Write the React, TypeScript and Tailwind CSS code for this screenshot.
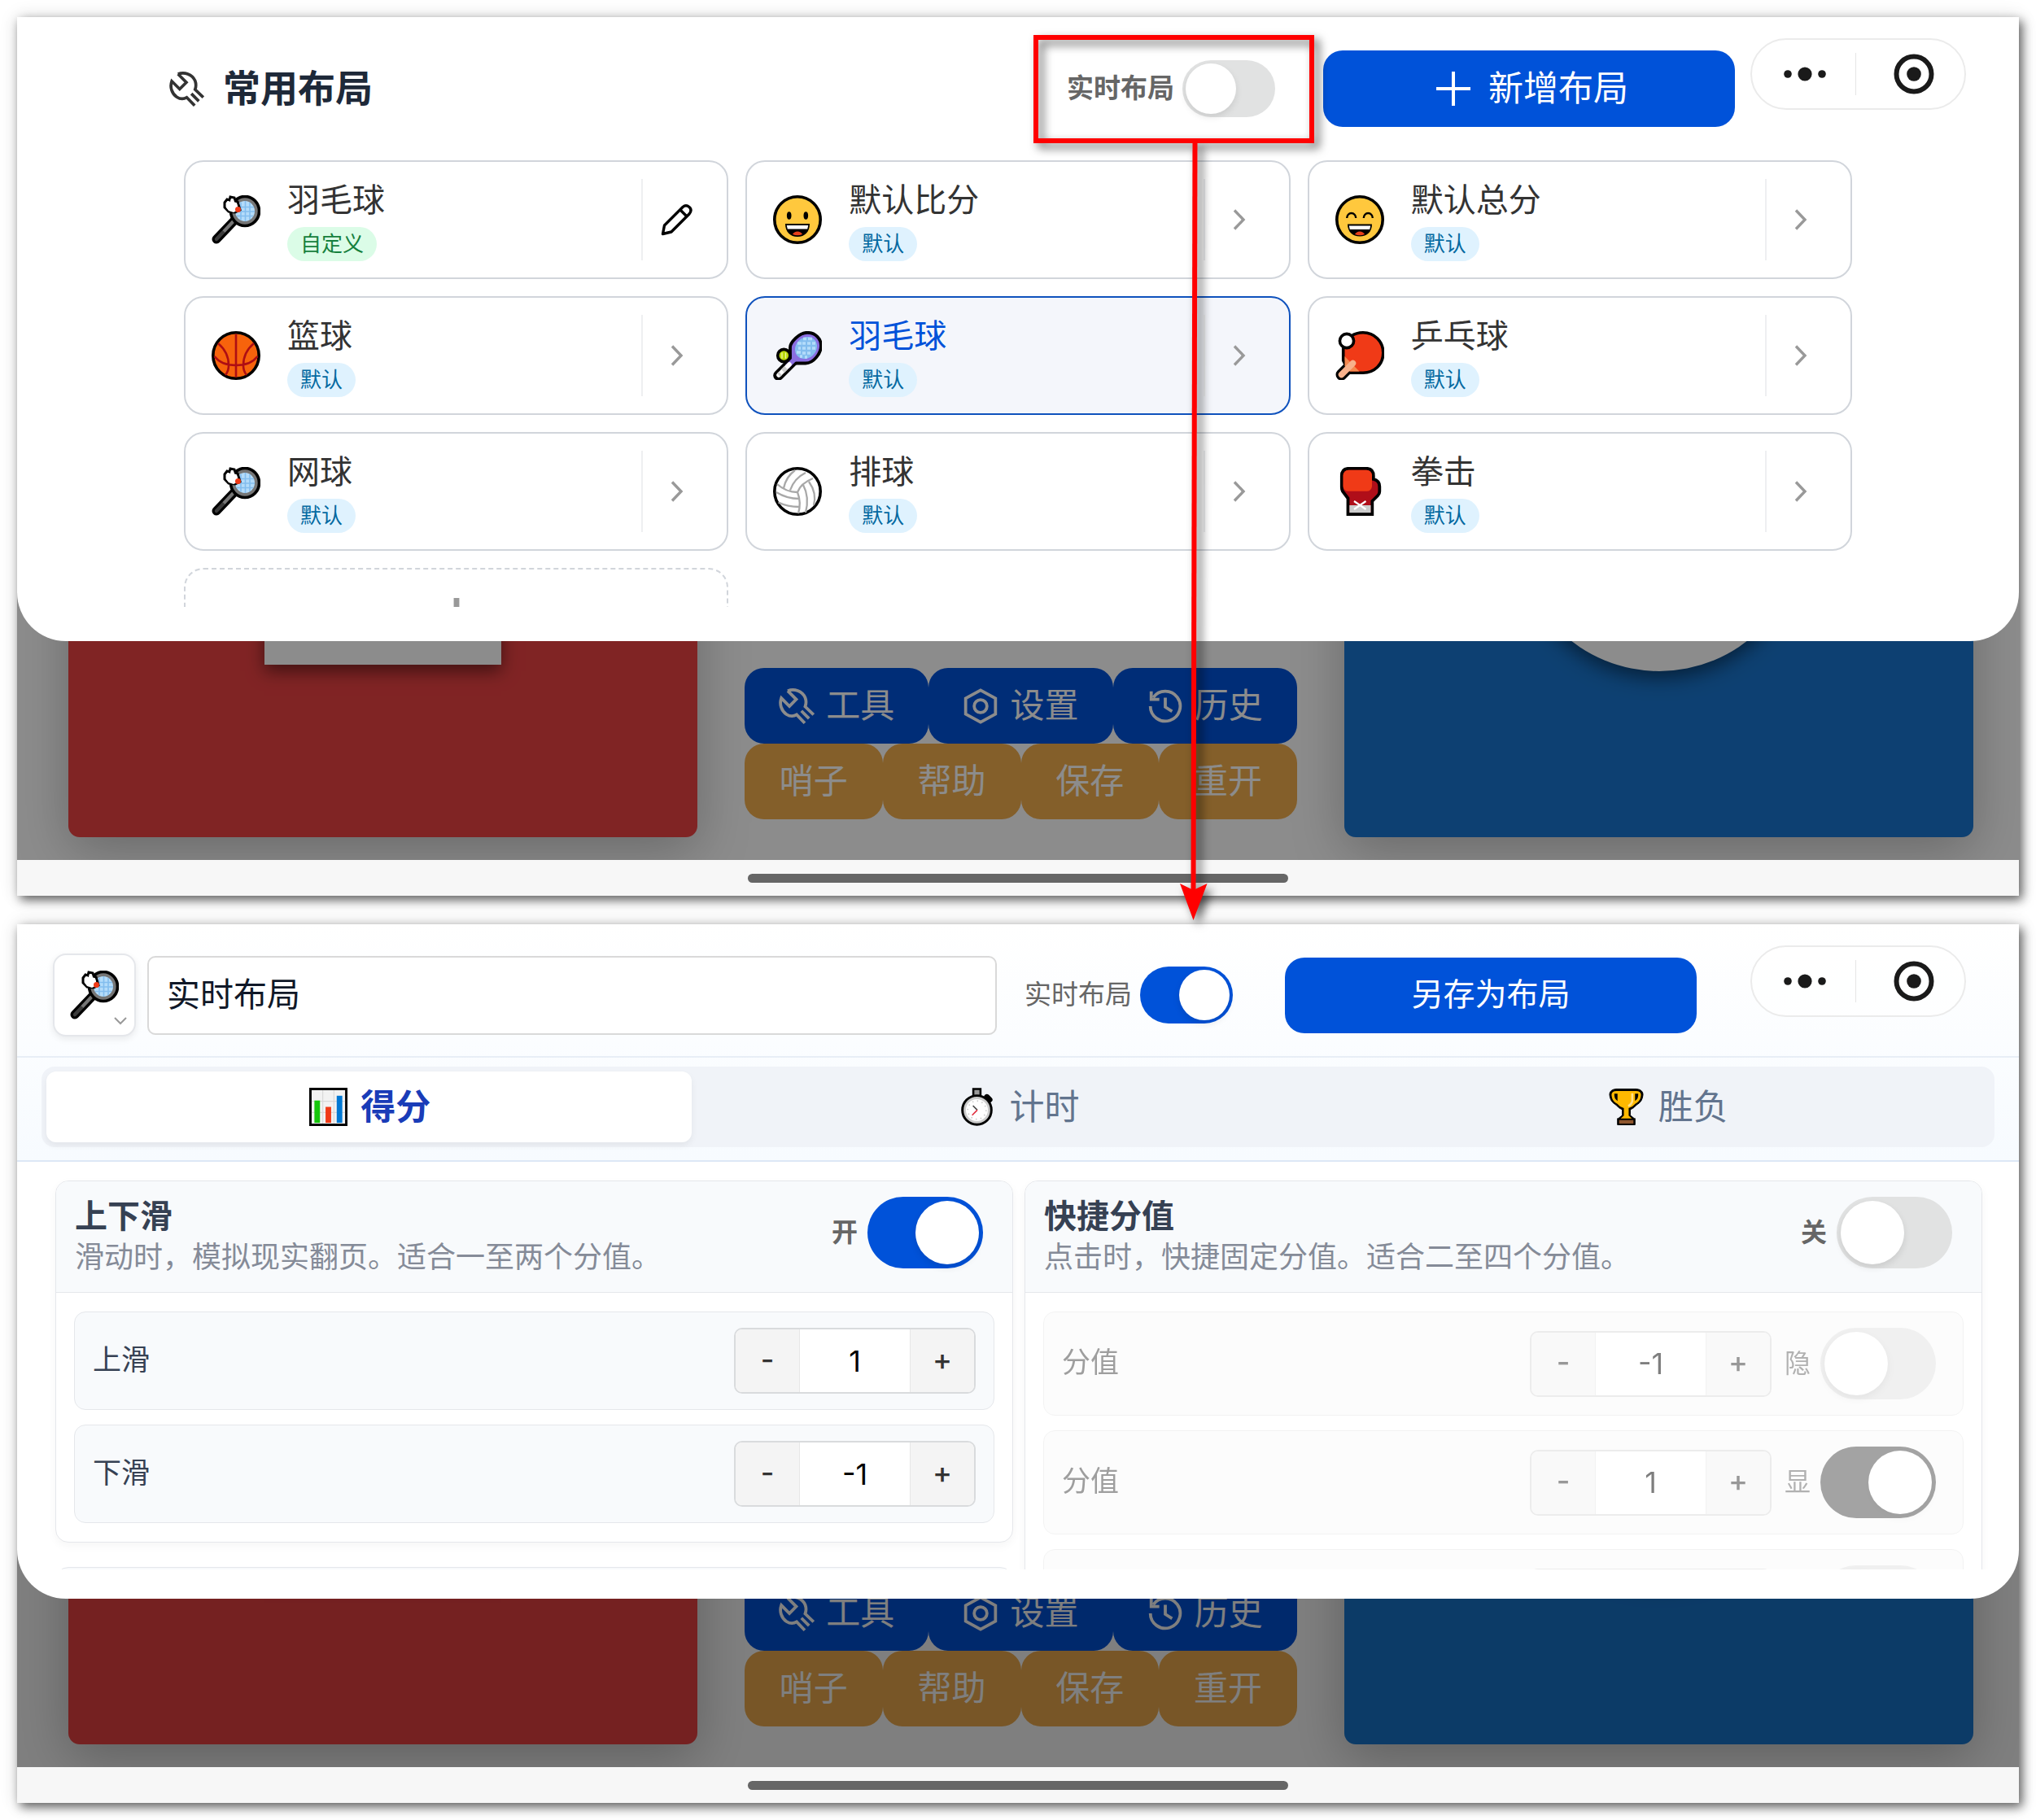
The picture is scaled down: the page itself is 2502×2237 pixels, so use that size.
import { useState } from "react";
import type { ReactNode } from "react";
import clsx from "clsx";

type IconProps = { className?: string };

/* ---------- line icons ---------- */

function ToolIcon({ className }: IconProps) {
    return (
        <svg viewBox="0 0 42 42" className={className} fill="none" stroke="currentColor" strokeWidth="3.6">
            <path d="M10.5 3 20.5 13l-8 8L3 11.500C.5 18.500 3 26.500 9 30.500c4 2.600 8.500 2.600 12 .5l9.500 9.800" />
            <path d="M10.500 3C18 0 27.500 3 31 11c1.300 3.500 1.300 7 0 10.500L40.800 31" />
            <path d="m26.500 26.500 9 9" />
        </svg>
    );
}

function SettingIcon({ className }: IconProps) {
    return (
        <svg viewBox="0 0 42 42" className={className} fill="none" stroke="currentColor" strokeWidth="3.6">
            <path d="M21 2.200 38.500 11.800v18.400L21 39.800 3.500 30.200V11.800z" />
            <circle cx="21" cy="21" r="7.500" />
        </svg>
    );
}

function HistoryIcon({ className }: IconProps) {
    return (
        <svg viewBox="0 0 42 42" className={className} fill="none" stroke="currentColor" strokeWidth="3.6">
            <path d="M3.500 21a17.500 17.500 0 1 0 3.300-10.200" />
            <path d="M4.500 3.500v9.500H14" />
            <path d="M21 11v11l8 5" />
        </svg>
    );
}

function PencilIcon({ className }: IconProps) {
    return (
        <svg viewBox="0 0 40 40" className={className} fill="none" stroke="currentColor" strokeWidth="3.400" strokeLinejoin="round">
            <path d="M2.500 37.500 4.500 27 27 4.500q4-3.500 8 0t0 8.500L13 35z" />
            <path d="m24 8 7.500 7.500" />
        </svg>
    );
}

function ChevronIcon({ className }: IconProps) {
    return (
        <svg viewBox="0 0 16 28" className={className} fill="none" stroke="currentColor" strokeWidth="3.400">
            <path d="m2 2.500 11 11.500L2 25.500" />
        </svg>
    );
}

function PlusIcon({ className }: IconProps) {
    return (
        <svg viewBox="0 0 42 42" className={className} fill="none" stroke="currentColor" strokeWidth="4">
            <path d="M21 0v42M0 21h42" />
        </svg>
    );
}

/* ---------- emoji ---------- */

function BadmintonEmoji({ className }: IconProps) {
    return (
        <svg viewBox="0 0 60 60" className={className}>
            <path d="M6 54 27 32" stroke="#000" strokeWidth="11" strokeLinecap="round" />
            <path d="M6 54 26 33" stroke="#3b3b3b" strokeWidth="4.500" strokeLinecap="round" />
            <path d="m15 44.500 13-14" stroke="#767676" strokeWidth="4" />
            <ellipse cx="41" cy="19.500" rx="17.500" ry="18" fill="#767676" stroke="#000" strokeWidth="3.600" />
            <ellipse cx="41" cy="19.500" rx="12" ry="12.500" fill="#b4dcfa" />
            <path d="M36 8.500v22M41.500 7v25M47 9v21M30 14.500h22M29 20h24M31 25.500h20" stroke="#83bdee" strokeWidth="1.600" />
            <path d="m16 9 3-4 3 1 1-4 5 1 1 4 3 1 3 10-6 3-8-1-5-5z" fill="#fff" stroke="#000" strokeWidth="3" />
            <path d="m18 10 3-3 2 2 1-5 3 1 1 4 3 1 2 8-6 3-6-2-3-4z" fill="#fff" />
            <circle cx="32.500" cy="17.500" r="3.500" fill="#f03a17" />
        </svg>
    );
}

function SmileyEmoji({ className }: IconProps) {
    return (
        <svg viewBox="0 0 60 60" className={className}>
            <circle cx="30" cy="30" r="28.200" fill="#ffc83d" stroke="#000" strokeWidth="3.600" />
            <ellipse cx="19.700" cy="25" rx="2.800" ry="4.800" />
            <ellipse cx="40.300" cy="25" rx="2.800" ry="4.800" />
            <path d="M15 35h30c0 10-6 16-15 16S15 45 15 35z" />
            <path d="M16.800 37h26.400l-1 4.600H17.800z" fill="#fff" />
            <path d="M24 48q2-3.500 6-3.500t6 3.500q-6 2.500-12 0z" fill="#e8401a" />
        </svg>
    );
}

function GrinEmoji({ className }: IconProps) {
    return (
        <svg viewBox="0 0 60 60" className={className}>
            <circle cx="30" cy="30" r="28.200" fill="#ffc83d" stroke="#000" strokeWidth="3.600" />
            <path d="M14.200 28a5.500 6 0 0 1 11 0M34.800 28a5.500 6 0 0 1 11 0" fill="none" stroke="#000" strokeWidth="2.400" />
            <path d="M15 35.500h30c0 9.500-6 15-15 15s-15-5.500-15-15z" />
            <path d="M16.800 37.500h26.400l-1 4.500H17.800z" fill="#fff" />
            <path d="M24 48q2-3.500 6-3.500t6 3.500q-6 2.500-12 0z" fill="#e8401a" />
        </svg>
    );
}

function BasketballEmoji({ className }: IconProps) {
    return (
        <svg viewBox="0 0 60 60" className={className}>
            <circle cx="30" cy="30" r="28.200" fill="#f7630c" stroke="#000" strokeWidth="3.600" />
            <path
                d="M30 3.500v53M3.500 31Q12 42 30 42t26.500-11M8 15q13 11 13 27 0 7-4 12M52 15Q39 26 39 42q0 7 4 12"
                fill="none"
                stroke="#ae0e14"
                strokeWidth="2.600"
            />
        </svg>
    );
}

function TennisEmoji({ className }: IconProps) {
    return (
        <svg viewBox="0 0 60 60" className={className}>
            <path d="M6.500 54.500 26 35" stroke="#000" strokeWidth="12.500" strokeLinecap="round" />
            <path
                d="M21 38.500V20C21 14 32 1.800 42 1.800S59 9 59 18 50 39.500 40 39.500H26z"
                fill="#8a6ee0"
                stroke="#000"
                strokeWidth="3.800"
                strokeLinejoin="round"
            />
            <path d="m17 44 9-9" stroke="#8a6ee0" strokeWidth="6" />
            <path d="m7 54 13-13" stroke="#fff" strokeWidth="5.500" strokeLinecap="round" />
            <path d="m7 54 2-2m3-3 4-4" stroke="#ccc" strokeWidth="5.500" />
            <ellipse cx="40.500" cy="20.500" rx="12.500" ry="14.500" transform="rotate(45 40.500 20.500)" fill="#83bdee" />
            <path
                d="M30 15h5M37 9.500h4M43 9.500h5M31 21h3M29 26h5M36 15h4M42 15h4M48 15h4M36 21h4M42 21h4M48 21h4M36 27h4M42 27h4M33 31h3M39 32h3"
                stroke="#b4dcfa"
                strokeWidth="3.500"
            />
            <circle cx="13.300" cy="30" r="7.600" fill="#bad80a" stroke="#000" strokeWidth="3.600" />
            <path d="M11 26.500v7M15.500 26.500v7" stroke="#eefaa0" strokeWidth="1.300" />
        </svg>
    );
}

function PingPongEmoji({ className }: IconProps) {
    return (
        <svg viewBox="0 0 60 60" className={className}>
            <path d="M7.500 53.500 20 41" stroke="#000" strokeWidth="14" strokeLinecap="round" />
            <path
                d="M9.700 36V18C14 8 23 1.800 34 1.800c14 0 24.800 11 24.800 25S48 51.200 34 51.200H17z"
                fill="#f03a17"
                stroke="#000"
                strokeWidth="3.600"
            />
            <path d="M11.500 31 29.500 49.500h-12L11.500 43z" fill="#f5894f" />
            <path d="m7.500 53.500 14-14" stroke="#f7b18b" strokeWidth="7.500" strokeLinecap="round" />
            <circle cx="14" cy="12" r="8.600" fill="#fff" stroke="#000" strokeWidth="3.600" />
        </svg>
    );
}

function VolleyballEmoji({ className }: IconProps) {
    return (
        <svg viewBox="0 0 60 60" className={className}>
            <circle cx="30" cy="30" r="28.200" fill="#fff" stroke="#000" strokeWidth="3.600" />
            <path
                d="M5 21q11 10 25 10Q34 20 49 14M13 26Q16 12 27 4M21 28.500Q26 14 40 7M37 22q8 15 3 34M44 18q10 14 6 29M30 31q5 13 1 26M4 31q13 8 28 8M6.500 43.500Q18 49 32 49"
                fill="none"
                stroke="#a8a8a8"
                strokeWidth="2.300"
            />
        </svg>
    );
}

function BoxingEmoji({ className }: IconProps) {
    return (
        <svg viewBox="0 0 60 60" className={className}>
            <path
                d="M15.500 58V38.500L9 30q-1.200-2-1.200-5V11q0-9.200 9-9.200h21q9 0 9 9.200v4q7.500 1.500 7.500 9v6q0 3-2 5l-7 7v16z"
                fill="#b00e19"
                stroke="#000"
                strokeWidth="3.800"
            />
            <path d="M17.300 47h26.200v9.200H17.300z" fill="#ccc" />
            <rect x="9.500" y="3.800" width="35.500" height="26" rx="6.500" fill="#f03a17" />
            <path d="m23 42 14.500 10M37.500 42 23 52" stroke="#fff" strokeWidth="2.200" />
        </svg>
    );
}

function ChartEmoji({ className }: IconProps) {
    return (
        <svg viewBox="0 0 48 48" className={className}>
            <rect x="1.500" y="1.500" width="45" height="45" fill="#f2f2f2" stroke="#000" strokeWidth="3" />
            <path d="M17 3v42M31 3v42M3 17h42M3 31h42" stroke="#d9d9d9" strokeWidth="1.200" />
            <path d="M6.500 16h7v28h-7z" fill="#16c60c" />
            <path d="M20.500 24h7v20h-7z" fill="#f03a17" />
            <path d="M34.500 10h7v34h-7z" fill="#0078d4" />
        </svg>
    );
}

function StopwatchEmoji({ className }: IconProps) {
    return (
        <svg viewBox="0 0 48 48" className={className}>
            <path d="M19.500 1.500h9v9h-9z" fill="#999" stroke="#000" strokeWidth="2.600" />
            <path d="m36.500 11.500 3.500 3.500" stroke="#000" strokeWidth="7" strokeLinecap="round" />
            <circle cx="24" cy="28" r="18.200" fill="#ccc" stroke="#000" strokeWidth="3" />
            <circle cx="24" cy="28" r="13.800" fill="#fff" />
            <circle cx="24" cy="28" r="11.500" fill="none" stroke="#ccc" strokeWidth="1.800" strokeDasharray="1.500 4.500" />
            <path d="m19 22.500 5.500 5.500" stroke="#444" strokeWidth="1.600" />
            <path d="m24.500 28-6.500 6.500" stroke="#e02b3c" strokeWidth="1.600" />
        </svg>
    );
}

function TrophyEmoji({ className }: IconProps) {
    return (
        <svg viewBox="0 0 48 48" className={className}>
            <path
                d="M11 1.500h26q8 1 8 7-.5 9-8 13-3 4-8 6v7l5 4h1v8H13v-8h1l5-4v-7q-5-2-8-6-7.500-4-8-13 0-6 8-7z"
                fill="#000"
                stroke="#000"
                strokeLinejoin="round"
            />
            <path d="M12 4h24q6.500 0 6.500 5c-.5 6-3 9-7 11q-3 4-8.500 5.500V35l4 3.500H17l4-3.500v-9.500Q15.500 24 12.500 20c-4-2-6.500-5-7-11q0-5 6.500-5z" fill="#ffb900" />
            <path d="M9 7.500h4v9Q8.500 14 9 7.500zM39 7.500h-4v9q4.500-2.500 4-9z" />
            <path d="M31.500 7v10q-1 4-5 6" fill="none" stroke="#ffe08a" strokeWidth="2.600" />
            <path d="M15 40.500h18v4.500H15z" fill="#8e562e" />
        </svg>
    );
}

/* ---------- controls ---------- */

interface SwitchProps {
    id: string;
    label: string;
    defaultOn?: boolean;
    large?: boolean;
    bold?: boolean;
}

function Switch({ id, label, defaultOn = false, large = false, bold = false }: SwitchProps) {
    const [on, setOn] = useState(defaultOn);

    return (
        <div className={clsx("flex shrink-0 items-center", large ? "gap-3" : "gap-2.5")}>
            <label
                htmlFor={id}
                className={clsx("leading-12 text-[#666]", large ? "text-[32px]" : "text-[33px]", bold && "font-bold")}
            >
                {label}
            </label>
            <input
                id={id}
                type="checkbox"
                role="switch"
                checked={on}
                onChange={() => setOn(!on)}
                className={clsx(
                    "flex shrink-0 cursor-pointer appearance-none items-center rounded-full bg-[#e1e2e2] transition-colors checked:justify-end checked:bg-[#0052d9]",
                    "before:block before:rounded-full before:bg-white before:shadow-[0_4px_8px_rgba(0,0,0,0.1)] before:content-['']",
                    large ? "h-[88px] w-[142px] px-[5px] before:size-[78px]" : "h-[70px] w-[114px] px-1 before:size-[62px]"
                )}
            />
        </div>
    );
}

function Stepper({ id, value }: { id: string; value: number }) {
    const [count, setCount] = useState(value);
    const side = "w-[78px] bg-[#f4f4f4] pb-1 text-4xl font-medium text-[#333]";

    return (
        <div className="flex h-[81px] w-[297px] shrink-0 overflow-hidden rounded-[10px] border-2 border-[#d9dbdd] bg-white font-['Inter','Noto_Sans_CJK_SC',sans-serif]">
            <button type="button" aria-label="-" className={side} onClick={() => setCount(count - 1)}>
                -
            </button>
            <input
                id={id}
                value={count}
                onChange={(e) => setCount(Number(e.target.value) || 0)}
                className="w-0 min-w-0 flex-1 border-x border-[#e7e7e7] bg-white text-center text-4xl text-black outline-none"
            />
            <button type="button" aria-label="+" className={side} onClick={() => setCount(count + 1)}>
                +
            </button>
        </div>
    );
}

function Capsule() {
    return (
        <div className="absolute top-[26px] right-[65px] flex h-[88px] w-[265px] items-center rounded-full border-2 border-[#ebebeb] bg-white/60 pl-0.5 text-[#1a1a1a]">
            <button type="button" aria-label="•••" className="flex flex-1 items-center justify-center">
                <svg viewBox="0 0 54 18" className="h-[18px] w-[54px]" fill="currentColor">
                    <circle cx="6" cy="9" r="4.800" />
                    <circle cx="27" cy="9" r="8.600" />
                    <circle cx="48" cy="9" r="4.800" />
                </svg>
            </button>
            <span className="h-[52px] w-px bg-[#e5e5e5]" />
            <button type="button" aria-label="⊙" className="flex flex-1 items-center justify-center pl-2">
                <svg viewBox="0 0 50 50" className="size-[50px]">
                    <circle cx="25" cy="25" r="21.500" fill="none" stroke="currentColor" strokeWidth="6" />
                    <circle cx="25" cy="25" r="8.800" fill="currentColor" />
                </svg>
            </button>
        </div>
    );
}

/* ---------- phone frame with the dimmed score board ---------- */

const tools = [
    { name: "工具", Icon: ToolIcon },
    { name: "设置", Icon: SettingIcon },
    { name: "历史", Icon: HistoryIcon },
];

const actions = ["哨子", "帮助", "保存", "重开"];

function Board({ dim }: { dim: string }) {
    return (
        <div className="relative h-[1036px] overflow-hidden bg-white">
            <div className="grid h-full grid-cols-[773fr_679fr_773fr] gap-[58px] pt-7 pr-14 pb-7 pl-[63px]">
                <div className="flex justify-center rounded-[14px] bg-[#ea4243] shadow-[0_16px_64px_rgba(0,0,0,0.25)]">
                    <div className="h-[768px] w-[291px] bg-white shadow-[0_8px_20px_rgba(0,0,0,0.5)]" />
                </div>
                <div className="flex flex-col justify-end pb-[22px] text-[42px] text-white">
                    <div className="grid grid-cols-3">
                        {tools.map(({ name, Icon }) => (
                            <button
                                key={name}
                                type="button"
                                className="flex h-[93px] items-center justify-center gap-[14px] rounded-3xl bg-[#0052d9] leading-15"
                            >
                                <Icon className="size-[44px]" />
                                {name}
                            </button>
                        ))}
                    </div>
                    <div className="grid grid-cols-4">
                        {actions.map((name) => (
                            <button key={name} type="button" className="h-[93px] rounded-3xl bg-[#f0ad4e] leading-15">
                                {name}
                            </button>
                        ))}
                    </div>
                </div>
                <div className="flex justify-center rounded-[14px] bg-[#1976cf] shadow-[0_16px_64px_rgba(0,0,0,0.25)]">
                    <div className="mt-[424px] size-[352px] rounded-full bg-white shadow-[0_8px_24px_rgba(0,0,0,0.5)]" />
                </div>
            </div>
            <div className={clsx("absolute inset-0", dim)} />
        </div>
    );
}

function Screen({ dim, children }: { dim: string; children: ReactNode }) {
    return (
        <section className="grid bg-white shadow-[4px_5px_12px_rgba(0,0,0,0.6),0_0_22px_rgba(0,0,0,0.12)]">
            <div className="col-start-1 row-start-1">
                <Board dim={dim} />
                <div className="flex h-11 items-center justify-center bg-[#f7f7f7]">
                    <div className="h-[11px] w-[27%] rounded-full bg-[#666]" />
                </div>
            </div>
            {children}
        </section>
    );
}

/* ---------- layout list ---------- */

interface LayoutItem {
    id: number;
    name: string;
    Emoji: (props: IconProps) => ReactNode;
    custom?: boolean;
    active?: boolean;
}

const layouts: LayoutItem[] = [
    { id: 1, name: "羽毛球", Emoji: BadmintonEmoji, custom: true },
    { id: 2, name: "默认比分", Emoji: SmileyEmoji },
    { id: 3, name: "默认总分", Emoji: GrinEmoji },
    { id: 4, name: "篮球", Emoji: BasketballEmoji },
    { id: 5, name: "羽毛球", Emoji: TennisEmoji, active: true },
    { id: 6, name: "乒乓球", Emoji: PingPongEmoji },
    { id: 7, name: "网球", Emoji: BadmintonEmoji },
    { id: 8, name: "排球", Emoji: VolleyballEmoji },
    { id: 9, name: "拳击", Emoji: BoxingEmoji },
];

function LayoutCard({ name, Emoji, custom, active }: LayoutItem) {
    return (
        <div
            className={clsx(
                "flex h-[146px] items-center rounded-3xl border-2",
                active ? "border-[#0f52bd] bg-[#f4f6fb]" : "border-[#d1d5db] bg-white"
            )}
        >
            <button type="button" className="flex flex-1 items-center gap-[33px] pl-8 text-left">
                <Emoji className="size-[60px]" />
                <span className="flex flex-col items-start gap-1">
                    <span className={clsx("text-[40px] leading-14", active ? "text-[#0052d9]" : "text-[#333]")}>{name}</span>
                    <span
                        className={clsx(
                            "rounded-full px-4 text-[26px] leading-[42px]",
                            custom ? "bg-green-100 text-[#15803d]" : "bg-sky-100 text-[#0369a1]"
                        )}
                    >
                        {custom ? "自定义" : "默认"}
                    </span>
                </span>
            </button>
            <button
                type="button"
                aria-label={name}
                className="flex h-[100px] w-[105px] items-center border-l-2 border-[#eeeff1] pl-[22px]"
            >
                {custom ? (
                    <PencilIcon className="size-[40px] text-black" />
                ) : (
                    <ChevronIcon className="ml-3 h-7 w-4 text-[#999]" />
                )}
            </button>
        </div>
    );
}

// Red frame round the switch, with an arrow down to the editor
function Callout() {
    return (
        <svg
            viewBox="0 0 346 1090"
            className="pointer-events-none absolute -top-[31px] -left-[41px] z-10 h-[1090px] w-[346px] max-w-none overflow-visible drop-shadow-[6px_6px_6px_rgba(0,0,0,0.6)]"
        >
            <rect x="3" y="3" width="339" height="127" fill="none" stroke="#f00" strokeWidth="6" />
            <path d="M198.500 127 196.500 1056" stroke="#f00" strokeWidth="6" />
            <path d="m196.500 1088-16.500-45 16.500 8 17-8z" fill="#f00" />
        </svg>
    );
}

function LayoutSheet() {
    return (
        <div className="relative col-start-1 row-start-1 flex h-[767px] flex-col self-start rounded-b-[60px] bg-white">
            <header className="flex items-center pt-[41px] pr-[349px] pl-[187px]">
                <ToolIcon className="size-[43px] text-[#333]" />
                <h1 className="ml-[23px] text-[46px] leading-16 font-bold text-gray-800">常用布局</h1>
                <div className="relative ml-auto">
                    <Switch id="live-list" label="实时布局" bold />
                    <Callout />
                </div>
                <button
                    type="button"
                    className="ml-[59px] flex h-[94px] w-[506px] items-center justify-center gap-[22px] rounded-3xl bg-[#0052d9] pl-2 text-[43px] leading-15 text-white"
                >
                    <PlusIcon className="size-[42px]" />
                    新增布局
                </button>
            </header>
            <Capsule />

            <div className="mt-[41px] mb-[42px] grid min-h-0 flex-1 auto-rows-max grid-cols-3 gap-[21px] overflow-hidden px-[205px]">
                {layouts.map((item) => (
                    <LayoutCard key={item.id} {...item} />
                ))}
                <button
                    type="button"
                    aria-label="新增布局"
                    className="flex h-[146px] items-center justify-center rounded-3xl border-2 border-dashed border-[#d1d5db] text-[#999]"
                >
                    <PlusIcon className="size-[72px]" />
                </button>
            </div>
        </div>
    );
}

/* ---------- layout editor ---------- */

const tabs = [
    { name: "得分", Emoji: ChartEmoji },
    { name: "计时", Emoji: StopwatchEmoji },
    { name: "胜负", Emoji: TrophyEmoji },
];

const swipeRows = [
    { id: "swipe-up", name: "上滑", value: 1 },
    { id: "swipe-down", name: "下滑", value: -1 },
];

const quickRows = [
    { id: "quick-1", name: "分值", value: -1, shown: false },
    { id: "quick-2", name: "分值", value: 1, shown: true },
    { id: "quick-3", name: "分值", value: 2, shown: false },
];

interface OptionCardProps {
    id: string;
    title: string;
    desc: string;
    on: boolean;
    children: ReactNode;
}

function OptionCard({ id, title, desc, on, children }: OptionCardProps) {
    return (
        <div className="overflow-hidden rounded-2xl border border-gray-200 bg-white shadow-[0_4px_12px_rgba(0,0,0,0.04)]">
            <div className="flex h-[137px] items-start justify-between border-b border-gray-200 bg-slate-50 pt-[19px] pr-9 pl-[23px]">
                <div>
                    <h2 className="text-[40px] leading-[50px] font-bold text-gray-700">{title}</h2>
                    <p className="text-4xl leading-[50px] text-[#858b98]">{desc}</p>
                </div>
                <Switch id={id} label={on ? "开" : "关"} defaultOn={on} large bold />
            </div>
            <div className="flex flex-col gap-[18px] px-[22px] py-[23px]">{children}</div>
        </div>
    );
}

function EditorSheet() {
    const [tab, setTab] = useState("得分");
    const row = "flex items-center justify-between rounded-[14px] border border-gray-200 bg-slate-50 py-[19px] pl-[22px]";

    return (
        <div className="relative col-start-1 row-start-1 flex h-[829px] flex-col self-start rounded-b-[60px] bg-white">
            <div className="border-b-2 border-[#dde7f6] bg-linear-to-b from-white to-[#f7fbff]">
                <header className="flex items-center border-b-2 border-[#e8eef6] pt-9 pr-[396px] pb-6 pl-11">
                    <button
                        type="button"
                        aria-label="羽毛球"
                        className="relative flex size-[102px] shrink-0 items-center justify-center rounded-2xl border-2 border-gray-200 bg-white shadow-[0_3px_8px_rgba(0,0,0,0.08)]"
                    >
                        <BadmintonEmoji className="size-[60px]" />
                        <svg viewBox="0 0 16 10" className="absolute right-[9px] bottom-3 h-[10px] w-4" fill="none" stroke="#999" strokeWidth="2">
                            <path d="m1 1 7 7 7-7" />
                        </svg>
                    </button>
                    <input
                        aria-label="实时布局"
                        defaultValue="实时布局"
                        className="ml-[14px] h-[97px] min-w-0 flex-1 rounded-[10px] border-2 border-[#d9d9d9] bg-white px-[22px] pb-2 text-[41px] text-gray-900 outline-none"
                    />
                    <div className="ml-[34px]">
                        <Switch id="live-edit" label="实时布局" defaultOn />
                    </div>
                    <button
                        type="button"
                        className="ml-16 h-[93px] w-[506px] shrink-0 rounded-3xl bg-[#0052d9] text-[39px] leading-14 text-white"
                    >
                        另存为布局
                    </button>
                </header>
                <nav className="mx-[30px] mt-[11px] mb-4 grid grid-cols-3 gap-1 rounded-[16px] bg-[#f0f3f8] p-1.5">
                    {tabs.map(({ name, Emoji }) => (
                        <button
                            key={name}
                            type="button"
                            onClick={() => setTab(name)}
                            className={clsx(
                                "flex h-[87px] items-center justify-center gap-4 rounded-xl pl-0.5 text-[43px] leading-15",
                                tab === name
                                    ? "bg-white font-bold text-blue-800 shadow-[0_4px_8px_rgba(0,0,0,0.06)]"
                                    : "text-slate-500"
                            )}
                        >
                            <Emoji className="size-[47px]" />
                            {name}
                        </button>
                    ))}
                </nav>
            </div>
            <Capsule />

            <div className="mb-9 grid min-h-0 flex-1 grid-cols-2 items-start gap-[14px] overflow-hidden pt-[23px] pr-[45px] pl-[47px]">
                <div className="flex flex-col gap-[30px]">
                    <OptionCard id="swipe" title="上下滑" desc="滑动时，模拟现实翻页。适合一至两个分值。" on>
                        {swipeRows.map((item) => (
                            <div key={item.id} className={clsx(row, "pr-[22px]")}>
                                <label htmlFor={item.id} className="text-[35px] leading-12 text-gray-700">
                                    {item.name}
                                </label>
                                <Stepper id={item.id} value={item.value} />
                            </div>
                        ))}
                    </OptionCard>
                    <div className="h-40 rounded-2xl border border-gray-200 bg-slate-50" />
                </div>
                <OptionCard id="quick" title="快捷分值" desc="点击时，快捷固定分值。适合二至四个分值。" on={false}>
                    {quickRows.map((item) => (
                        <div key={item.id} className={clsx(row, "pr-[33px] opacity-50 grayscale")}>
                            <label htmlFor={item.id} className="text-[35px] leading-12 text-gray-700">
                                {item.name}
                            </label>
                            <div className="flex items-center gap-4">
                                <Stepper id={item.id} value={item.value} />
                                <Switch id={item.id + "-show"} label={item.shown ? "显" : "隐"} defaultOn={item.shown} large />
                            </div>
                        </div>
                    ))}
                </OptionCard>
            </div>
        </div>
    );
}

export default function App() {
    return (
        <main className="flex flex-col gap-[35px] bg-white p-[21px] font-['Roboto','Noto_Sans_CJK_SC',sans-serif]">
            <Screen dim="bg-black/45">
                <LayoutSheet />
            </Screen>
            <Screen dim="bg-black/50">
                <EditorSheet />
            </Screen>
        </main>
    );
}
